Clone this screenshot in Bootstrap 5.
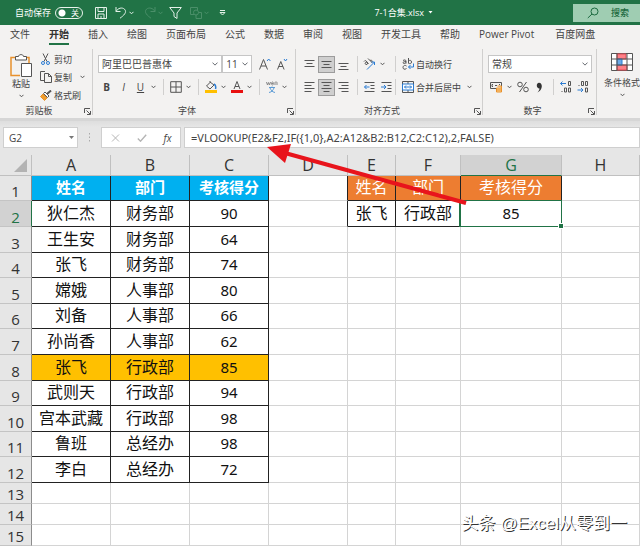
<!DOCTYPE html>
<html lang="zh-CN">
<head>
<meta charset="utf-8">
<meta name="viewport" content="width=device-width, initial-scale=1">
<title>7-1合集.xlsx</title>
<link href="https://cdn.jsdelivr.net/npm/bootstrap@5.3.0/dist/css/bootstrap.min.css" rel="stylesheet">
<style>
body{font-family:"Open Sans","Noto Sans CJK SC",sans-serif;font-size:10px;line-height:14px;color:#444;background:#e6e6e6;overflow-x:hidden}
button{font:inherit;color:inherit;background:none;border:0;padding:0}
svg{display:block;fill:none;stroke:#555;stroke-width:1}
.titlebar{background:#217346;color:#fff;height:25px}
.titlebar svg{stroke:#e4f1e9}
.titlebar .dim svg{stroke:#4a8f69}
.autosave{font-size:9px;padding-left:15px}
.switch-box{position:relative;width:28px;height:12px}
.switch-box input{appearance:none;display:block;width:28px;height:12px;margin:0;border:1px solid #e8f3ec;border-radius:6px;background:radial-gradient(circle at 6px 5px,#fff 3px,transparent 4px)}
.switch-box span{position:absolute;right:4px;top:0;font-size:8px;line-height:12px;pointer-events:none}
.file-name{margin-right:140px;font-size:9px}
.search-box{width:67px;height:18px;background:#9fcdb2;color:#1c6a40;padding-left:14px;font-size:9px;font-weight:500}
.titlebar .search-box svg{stroke:#1c6a40}
.tabs{height:21px;background:#f3f2f1;padding-left:10px;gap:19px}
.tabs a{color:#444;text-decoration:none;line-height:18px;height:20px;white-space:nowrap;border-bottom:2px solid transparent}
.tabs a.current{font-weight:700;color:#333;border-color:#217346}
.tabs .latin{padding-right:2px}
.ribbon{height:75px;background:#f3f2f1;border-bottom:3px solid #d6d6d6}
.group{position:relative;flex:none;padding:6px 5px 0;border-right:1px solid #d0cfce;margin:3px 0}
.g-clip{width:93px;padding-top:1px}.g-font{width:203px}.g-align{width:187px}.g-num{width:114px}.g-style{border:0;padding:4px 0 0 7px}
.caption{position:absolute;left:0;right:0;bottom:-3px;text-align:center;font-size:9px;padding-right:14px}
.launch{position:absolute;right:1px;bottom:0}
.line1{height:18px}.line2{height:18px;margin-top:5px}
.tool{width:17px;height:17px;display:flex;align-items:center;justify-content:center;flex:none}
.chev{width:9px;height:17px;display:flex;align-items:center;justify-content:center;flex:none}
.rule{width:1px;height:16px;background:#d0cfce;margin:0 3px 0 5px;flex:none}
.on{background:#cfcfcf;border:1px solid #9c9c9c}
.pick.form-select{font-size:10px;line-height:15px;height:18px;min-height:0;padding:0 12px 0 3px;border:1px solid #c6c6c6;border-radius:0;color:#444;background-color:#fff;background-size:6px;background-position:right 3px center}
.w-font{width:127px}.w-size{width:30px}.w-num{width:104px}
.lab{font-size:9px;line-height:13px;white-space:nowrap}
.fbar{height:34px;padding-top:6px;background:linear-gradient(#dedede,#e6e6e6 6px)}
.fbar .box{height:21px;background:#fff;border:1px solid #cfcfcf}
.name-box{width:75px;margin-left:3px}
.fbar input{border:0;background:none;color:#444;padding:0;min-width:0;outline:0}
.name-box input{width:56px;font-size:10px;margin-left:5px}
.fx-box{width:80px;margin-right:3px}
.formula input{font-family:"Noto Sans","Noto Sans CJK SC",sans-serif;font-size:11px;width:100%;padding-left:6px}
.sheet{table-layout:fixed;width:100%;border-collapse:separate;border-spacing:0;background:#fff;color:#111;font-size:16px;line-height:20px;text-align:center}
.sheet th,.sheet td{padding:0;border:0 solid #d4d4d4;border-width:0 1px 1px 0;font-weight:400;white-space:nowrap}
.sheet td{font-family:"Noto Sans","Noto Sans CJK SC",sans-serif;font-size:16px}
.sheet td.k{padding-bottom:2px}
.sheet thead th{height:21px;background:#e6e6e6;color:#333;border-color:#c0c0c0;line-height:20px}
.sheet tbody th{background:#e6e6e6;color:#333;border-color:#c4c4c4;border-right-color:#8c8c8c;vertical-align:bottom;font-size:15px;line-height:17px}
.sheet tbody tr{height:21px}
.sheet tbody tr.rec{height:26px}
.sheet tbody tr.rec.short,.sheet tbody tr.headrow{height:25px}
.sheet td.n{font-size:15px}
.sheet td.k{border-color:#222}
.sheet td.kr{border-right-color:#222}
.sheet .blue{background:#00b0f0;color:#fff;font-weight:700;font-size:15px}
.sheet .orange{background:#ed7d31;color:#fff}
.sheet .gold td.k{background:#ffc000}
.sheet thead th.act{background:#d2d2d2;color:#217346;border-bottom-color:#217346}
.sheet tbody th.act{background:#d2d2d2;color:#217346;border-right-color:#217346}
.sel{position:relative}
.sel::before{content:"";position:absolute;inset:-1px -1px -1px -2px;border:2px solid #217346;border-width:1px 1px 1px 2px}
.sel::after{content:"";position:absolute;right:-2px;bottom:-2px;width:4px;height:4px;background:#217346;outline:1px solid #fff}
.pointer{position:absolute;left:267px;top:143px;pointer-events:none}
.watermark{position:absolute;right:13px;bottom:10px;font-family:"Liberation Sans","Noto Sans CJK SC",sans-serif;font-size:17px;line-height:24px;color:#fff;text-shadow:1px 1px 0 #333;white-space:nowrap}
</style>
<script src="https://cdn.jsdelivr.net/npm/bootstrap@5.3.0/dist/js/bootstrap.bundle.min.js"></script>
</head>
<body>
<svg width="0" height="0" class="position-absolute" aria-hidden="true">
<defs>
<symbol id="cv" viewBox="0 0 5 4"><path d="M.5.8 2.5 2.8 4.5.8"/></symbol>
<symbol id="la" viewBox="0 0 7 7"><path d="M.5 5V.5H6M2.500 2.500 6 6M6.500 3v3.500H3"/></symbol>
</defs>
</svg>
<div class="position-relative overflow-hidden">
<header class="titlebar d-flex align-items-center">
  <div class="d-flex align-items-center flex-grow-1">
    <label class="autosave" for="autosave">自动保存</label>
    <div class="switch-box ms-1"><input type="checkbox" role="switch" id="autosave"><span>关</span></div>
    <button class="ms-2 ps-1" aria-label="保存"><svg width="12" height="12" viewBox="0 0 12 12"><path d="M.5.5h11v11h-11zM3 .5v4h6v-4M3 11.500V7h6v4.500M6 9v2.500"/></svg></button>
    <button class="ms-2" aria-label="撤消"><svg width="12" height="13" viewBox="0 0 12 13"><path d="M1 1v4.500h4.500M1 5.500C3 2 7 1 9.500 3.200c3 3-1 6.500-4.500 9"/></svg></button>
    <button class="chev" aria-label="撤消选项"><svg width="5" height="4"><use href="#cv"/></svg></button>
    <button class="ms-1 ps-1 dim" aria-label="恢复"><svg width="12" height="13" viewBox="0 0 12 13"><path d="M11 1v4.500H6.500M11 5.500C9 2 5 1 2.500 3.200c-3 3 1 6.500 4.500 9"/></svg></button>
    <button class="chev dim" aria-label="恢复选项"><svg width="5" height="4"><use href="#cv"/></svg></button>
    <button class="ms-1" aria-label="筛选"><svg width="13" height="12" viewBox="0 0 13 12"><path d="M.7.500h11.600L8 6v5.500L5 9.500V6z"/></svg></button>
    <button class="ms-1 ps-1 dim" aria-label="形状"><svg width="12" height="12" viewBox="0 0 12 12"><path d="M4 7.500H.5v-7h7V3"/><circle cx="6" cy="5.500" r="2.500"/><path d="M6 8v3.500h5.500v-6H8.500"/></svg></button>
    <button class="chev dim" aria-label="形状选项"><svg width="5" height="4"><use href="#cv"/></svg></button>
    <button class="ms-2" aria-label="自定义快速访问工具栏"><svg width="7" height="6" viewBox="0 0 7 6"><path d="M1 .5h5M1 2.500h5L3.500 5z"/></svg></button>
  </div>
  <button class="file-name d-flex align-items-center gap-1">7-1合集.xlsx<svg width="5" height="3" viewBox="0 0 5 3"><path d="M.5 0h4L2.500 2.500z" fill="#fff" stroke="none"/></svg></button>
  <button class="search-box d-flex align-items-center gap-2"><svg width="12" height="12" viewBox="0 0 12 12"><circle cx="7.500" cy="4.500" r="3.500"/><path d="M5 7 .8 11"/></svg><span class="ps-1">搜索</span></button>
</header>
<nav class="tabs d-flex" aria-label="功能区">
  <a href="#">文件</a><a href="#" class="current">开始</a><a href="#">插入</a><a href="#">绘图</a><a href="#">页面布局</a><a href="#">公式</a><a href="#">数据</a><a href="#">审阅</a><a href="#">视图</a><a href="#">开发工具</a><a href="#">帮助</a><a href="#" class="latin">Power Pivot</a><a href="#">百度网盘</a>
</nav>
<section class="ribbon d-flex overflow-hidden">
  <div class="group g-clip d-flex">
    <button class="d-flex flex-column align-items-center ms-1 pt-1"><svg width="24" height="23" viewBox="0 0 24 23"><path d="M8 3.500H2v18h9M16 3.500h4V9" stroke="#e8912d" stroke-width="1.500"/><path d="M6.500 6V2.500h3C9.500 0 14.500 0 14.500 2.500h3V6z" fill="#fff"/><path d="M12.500 9.500h10v13h-10z" fill="#fff"/></svg><span class="lab">粘贴</span><svg width="5" height="4" class="mt-1"><use href="#cv"/></svg></button>
    <div class="d-flex flex-column ms-1">
      <button class="line1 d-flex align-items-center"><span class="tool"><svg width="9" height="12" viewBox="0 0 9 12"><path d="m2 .5 4 8M7 .5l-4 8"/><circle cx="2" cy="10" r="1.500" stroke="#2b7cd3"/><circle cx="7" cy="10" r="1.500" stroke="#2b7cd3"/></svg></span><span class="lab">剪切</span></button>
      <button class="line1 d-flex align-items-center"><span class="tool"><svg width="12" height="12" viewBox="0 0 12 12"><path d="M4 9.500H.5v-9H5M4.500 2.500h4l3 3v6h-7zM8.500 2.500v3h3"/></svg></span><span class="lab">复制</span><svg class="ms-2" width="5" height="4"><use href="#cv"/></svg></button>
      <button class="line1 d-flex align-items-center"><span class="tool"><svg width="12" height="11" viewBox="0 0 12 11"><path d="m11 .5-4 3.500" stroke-width="2"/><path d="m5 2 4 4-1.500 1.500-4-4z" fill="#fff"/><path d="M3 4 .5 6.500l4 4L7 8z" fill="#f0a030" stroke="#e8912d"/></svg></span><span class="lab">格式刷</span></button>
    </div>
    <div class="caption">剪贴板</div>
    <button class="launch" aria-label="剪贴板选项"><svg width="7" height="7"><use href="#la"/></svg></button>
  </div>
  <div class="group g-font">
    <div class="line1 d-flex align-items-center">
      <select class="form-select pick w-font" aria-label="字体"><option>阿里巴巴普惠体</option></select>
      <select class="form-select pick w-size" aria-label="字号"><option>11</option></select>
      <button class="tool ms-1" aria-label="增大字号"><svg width="12" height="12" viewBox="0 0 12 12"><path d="m.5 11.500 4-10 4 10M2 8h5"/><path d="m8 3 1.700-2 1.700 2" stroke="#2b7cd3"/></svg></button>
      <button class="tool" aria-label="减小字号"><svg width="12" height="12" viewBox="0 0 12 12"><path d="m1.500 11.500 3.300-8 3.300 8M2.500 8.500H7"/><path d="m8 1 1.500 2L11 1" stroke="#2b7cd3"/></svg></button>
    </div>
    <div class="line2 d-flex align-items-center">
      <button class="tool fw-bold">B</button><button class="tool fst-italic">I</button><button class="tool text-decoration-underline">U</button><button class="chev" aria-label="下划线选项"><svg width="5" height="4"><use href="#cv"/></svg></button>
      <span class="rule"></span>
      <button class="tool" aria-label="边框"><svg width="12" height="12" viewBox="0 0 12 12" stroke-width="1.300"><path d="M.7.700h10.600v10.600H.7zM6 .7v10.600M.7 6h10.600"/></svg></button><button class="chev" aria-label="边框选项"><svg width="5" height="4"><use href="#cv"/></svg></button>
      <span class="rule"></span>
      <button class="tool" aria-label="填充颜色"><svg width="12" height="12" viewBox="0 0 12 12"><path d="M5.500 1 1.500 5 5 8l4-4L5 1V0"/><path d="M9 3c2 1 2 3 1.500 5" stroke="#2b7cd3" stroke-width="1.500"/><path d="M0 10.500h12" stroke="#ffc000" stroke-width="3"/></svg></button><button class="chev" aria-label="填充选项"><svg width="5" height="4"><use href="#cv"/></svg></button>
      <button class="tool" aria-label="字体颜色"><svg width="12" height="12" viewBox="0 0 12 12"><path d="m3 8 3-7.500L9 8M4 5.500h4"/><path d="M0 10.500h12" stroke="#e81010" stroke-width="3"/></svg></button><button class="chev" aria-label="颜色选项"><svg width="5" height="4"><use href="#cv"/></svg></button>
      <span class="rule"></span>
      <button class="tool" aria-label="拼音"><svg width="12" height="12" viewBox="0 0 12 12"><path d="m.5 1 1 3 1-2.500 1 2.500 1-3M5.500 2.500h2c0-2-2-2-2 0s1.500 1.500 2 1M9 4V1.500c0-.800 2-.800 2 0V4" stroke="#888"/><path d="M3 6.500h6M6 5.500v1M4 7c1 2 2 4 5 4.500M8 7c-1 2-2 4-5 4.500" stroke="#5b9bd5"/></svg></button><button class="chev" aria-label="拼音选项"><svg width="5" height="4"><use href="#cv"/></svg></button>
    </div>
    <div class="caption">字体</div>
    <button class="launch" aria-label="字体选项"><svg width="7" height="7"><use href="#la"/></svg></button>
  </div>
  <div class="group g-align">
    <div class="line1 d-flex align-items-center">
      <button class="tool" aria-label="顶端对齐"><svg width="11" height="11" viewBox="0 0 11 11"><path d="M.5 1.500h10M2.500 4.500h6M.5 7.500h10"/></svg></button>
      <button class="tool on" aria-label="垂直居中"><svg width="11" height="11" viewBox="0 0 11 11"><path d="M.5 2.500h10M2.500 5.500h6M.5 8.500h10"/></svg></button>
      <button class="tool" aria-label="底端对齐"><svg width="11" height="11" viewBox="0 0 11 11"><path d="M.5 4.500h10M2.500 7.500h6M.5 10.500h10"/></svg></button>
      <span class="rule"></span>
      <button class="tool" aria-label="方向"><svg width="13" height="12" viewBox="0 0 13 12"><path d="M1 3.500c1-1.500 2-1 3 .5L5.500 6M4 4C2 4 1.500 6 3 6.500s2-1 1-2.500M5 .5l4 4M7 2.500c2-1 3 1 1.500 2"/><path d="M4 11.500 11.500 4M8.500 4h3v3" stroke="#2b7cd3"/></svg></button><button class="chev" aria-label="方向选项"><svg width="5" height="4"><use href="#cv"/></svg></button>
      <span class="rule ms-2"></span>
      <button class="d-flex align-items-center"><span class="tool"><svg width="12" height="12" viewBox="0 0 12 12"><path d="M1 2.500c1.500-1 3-.5 3 .5v2.500M4 3.500C2 3.500 1 4 1 4.800s2 1 3-.3M6.500 0v5.500M6.500 3c1-1 3-1 3 1s-2 2-3 1M4.500 8C2.500 6.500 1 8 1 9.500s1.500 2.500 3.500 1"/><path d="M11.500 5.500v3.500H6.500M8.500 7l-2 2 2 2" stroke="#2b7cd3"/></svg></span><span class="lab">自动换行</span></button>
    </div>
    <div class="line2 d-flex align-items-center">
      <button class="tool" aria-label="左对齐"><svg width="11" height="11" viewBox="0 0 11 11"><path d="M.5 .5h10M.5 3.500h7M.5 6.500h10M.5 9.500h7"/></svg></button>
      <button class="tool on" aria-label="居中"><svg width="11" height="11" viewBox="0 0 11 11"><path d="M.5 .5h10M2.500 3.500h6M.5 6.500h10M2.500 9.500h6"/></svg></button>
      <button class="tool" aria-label="右对齐"><svg width="11" height="11" viewBox="0 0 11 11"><path d="M.5 .5h10M3.500 3.500h7M.5 6.500h10M3.500 9.500h7"/></svg></button>
      <span class="rule"></span>
      <button class="tool" aria-label="减少缩进"><svg width="11" height="11" viewBox="0 0 11 11"><path d="M.5 .5h10M6.500 3.500h4M6.500 6.500h4M.5 9.500h10"/><path d="M5.500 5H.5M2.500 3l-2 2 2 2" stroke="#2b7cd3"/></svg></button>
      <button class="tool" aria-label="增加缩进"><svg width="11" height="11" viewBox="0 0 11 11"><path d="M.5 .5h10M6.500 3.500h4M6.500 6.500h4M.5 9.500h10"/><path d="M0 5h5M3 3l2 2-2 2" stroke="#2b7cd3"/></svg></button>
      <span class="rule ms-0"></span>
      <button class="d-flex align-items-center"><span class="tool"><svg width="12" height="12" viewBox="0 0 12 12"><path d="M.5.500h11v11H.5zM6 .5V3M6 9v2.500"/><path d="M.5 3h11v6H.5z" fill="#fff" stroke="#2b7cd3"/><path d="M2.500 6h7M4 4.500 2.500 6 4 7.500M8 4.500 9.500 6 8 7.500" stroke="#2b7cd3"/></svg></span><span class="lab">合并后居中</span></button>
      <button class="chev ms-1" aria-label="合并选项"><svg width="5" height="4"><use href="#cv"/></svg></button>
    </div>
    <div class="caption">对齐方式</div>
    <button class="launch" aria-label="对齐选项"><svg width="7" height="7"><use href="#la"/></svg></button>
  </div>
  <div class="group g-num">
    <div class="line1"><select class="form-select pick w-num" aria-label="数字格式"><option>常规</option></select></div>
    <div class="line2 d-flex align-items-center">
      <button class="tool" aria-label="会计数字格式"><svg width="13" height="12" viewBox="0 0 13 12"><path d="M.5 1.500h11v6H.5zM3 3.500H2v2h1M5 4.500h2M9 3.500h1"/><path d="M6.500 7h5v4h-5zM6.500 9h5M7.500 5h4v2" stroke="#e8912d" fill="#ffd08a"/></svg></button><button class="chev" aria-label="货币选项"><svg width="5" height="4"><use href="#cv"/></svg></button>
      <button class="tool" aria-label="百分比"><svg width="12" height="12" viewBox="0 0 12 12"><circle cx="3" cy="3.500" r="2.300"/><circle cx="9" cy="8.500" r="2.300"/><path d="m9.500 1-7 10"/></svg></button>
      <button class="tool" aria-label="千位分隔"><svg width="7" height="11" viewBox="0 0 7 11"><path d="M3 .8C7 .8 7 8 1.500 10.500c1-1.500 2-2.500 2-4C0 6.500 0 .8 3 .8z" fill="#333" stroke="none"/></svg></button>
      <span class="rule"></span>
      <button class="tool" aria-label="增加小数位"><svg width="12" height="12" viewBox="0 0 12 12"><path d="M6 2.500H.5M2.500.500l-2 2 2 2" stroke="#2b7cd3"/><path d="M8.500.500h2v4h-2zM4.500 7h2v4h-2zM8.500 7h2v4h-2zM1.500 10.500h1"/></svg></button>
      <button class="tool" aria-label="减少小数位"><svg width="12" height="12" viewBox="0 0 12 12"><path d="M4.500.500h2v4h-2zM8.500.500h2v4h-2zM1.500 4.500h1M8.500 7h2v4h-2z"/><path d="M.5 9H6M4 7l2 2-2 2" stroke="#2b7cd3"/></svg></button>
    </div>
    <div class="caption">数字</div>
    <button class="launch" aria-label="数字选项"><svg width="7" height="7"><use href="#la"/></svg></button>
  </div>
  <div class="group g-style">
    <button class="d-flex flex-column align-items-center"><svg width="22" height="19" viewBox="0 0 22 19"><path d="M.5.500h21v17H.5z" fill="#fff"/><path d="M6 1h9v5H6zM6 12h10v5H6z" fill="#ff8087" stroke="#e04a55"/><path d="M6 6h5v6H6z" fill="#6ca9e8" stroke="#2b7cd3"/><path d="M.5 6h21M.5 12h21M6 .5v17M16 .5v17"/></svg><span class="lab mt-1">条件格式</span><svg width="5" height="4" class="mt-1"><use href="#cv"/></svg></button>
  </div>
</section>
<section class="fbar d-flex">
  <div class="box name-box d-flex align-items-center flex-shrink-0"><input type="text" value="G2" aria-label="名称框"><svg class="ms-1" width="5" height="3" viewBox="0 0 5 3"><path d="M0 0h5L2.500 3z" fill="#777" stroke="none"/></svg></div>
  <svg class="mx-2 flex-shrink-0" width="7" height="21" viewBox="0 0 7 21"><path d="M3.500 6v1.500M3.500 9.500V11M3.500 13v1.500" stroke="#aaa"/></svg>
  <div class="box fx-box d-flex align-items-center justify-content-around flex-shrink-0">
    <button aria-label="取消"><svg width="9" height="8" viewBox="0 0 9 8"><path d="m1 .5 7 7M8 .5l-7 7" stroke="#b5b5b5"/></svg></button>
    <button aria-label="输入"><svg width="10" height="8" viewBox="0 0 10 8"><path d="m.8 4.500 2.700 2.700L9.200.8" stroke="#b5b5b5" stroke-width="1.400"/></svg></button>
    <button class="fst-italic" aria-label="插入函数">fx</button>
  </div>
  <div class="box formula d-flex align-items-center flex-grow-1"><input type="text" value="=VLOOKUP(E2&amp;F2,IF({1,0},A2:A12&amp;B2:B12,C2:C12),2,FALSE)" aria-label="编辑栏"></div>
</section>
<table class="sheet">
  <colgroup><col width="32"><col width="79"><col width="79"><col width="79"><col width="79"><col width="48"><col width="65"><col width="101"><col></colgroup>
  <thead><tr><th aria-label="全选"><svg class="ms-auto me-1" width="13" height="13" viewBox="0 0 13 13"><path d="M13 0v13H0z" fill="#b3b3b3" stroke="none"/></svg></th><th>A</th><th>B</th><th>C</th><th>D</th><th>E</th><th>F</th><th class="act">G</th><th>H</th></tr></thead>
  <tbody>
  <tr class="headrow"><th>1</th><td class="k blue">姓名</td><td class="k blue">部门</td><td class="k blue">考核得分</td><td class="kr"></td><td class="k orange">姓名</td><td class="k orange">部门</td><td class="k orange">考核得分</td><td></td></tr>
  <tr class="rec"><th class="act">2</th><td class="k">狄仁杰</td><td class="k">财务部</td><td class="k n">90</td><td class="kr"></td><td class="k">张飞</td><td class="k">行政部</td><td class="k n sel">85</td><td></td></tr>
  <tr class="rec"><th>3</th><td class="k">王生安</td><td class="k">财务部</td><td class="k n">64</td><td></td><td></td><td></td><td></td><td></td></tr>
  <tr class="rec short"><th>4</th><td class="k">张飞</td><td class="k">财务部</td><td class="k n">74</td><td></td><td></td><td></td><td></td><td></td></tr>
  <tr class="rec"><th>5</th><td class="k">嫦娥</td><td class="k">人事部</td><td class="k n">80</td><td></td><td></td><td></td><td></td><td></td></tr>
  <tr class="rec short"><th>6</th><td class="k">刘备</td><td class="k">人事部</td><td class="k n">66</td><td></td><td></td><td></td><td></td><td></td></tr>
  <tr class="rec"><th>7</th><td class="k">孙尚香</td><td class="k">人事部</td><td class="k n">62</td><td></td><td></td><td></td><td></td><td></td></tr>
  <tr class="rec gold"><th>8</th><td class="k">张飞</td><td class="k">行政部</td><td class="k n">85</td><td></td><td></td><td></td><td></td><td></td></tr>
  <tr class="rec short"><th>9</th><td class="k">武则天</td><td class="k">行政部</td><td class="k n">94</td><td></td><td></td><td></td><td></td><td></td></tr>
  <tr class="rec"><th>10</th><td class="k">宫本武藏</td><td class="k">行政部</td><td class="k n">98</td><td></td><td></td><td></td><td></td><td></td></tr>
  <tr class="rec short"><th>11</th><td class="k">鲁班</td><td class="k">总经办</td><td class="k n">98</td><td></td><td></td><td></td><td></td><td></td></tr>
  <tr class="rec"><th>12</th><td class="k">李白</td><td class="k">总经办</td><td class="k n">72</td><td></td><td></td><td></td><td></td><td></td></tr>
  <tr><th>13</th><td></td><td></td><td></td><td></td><td></td><td></td><td></td><td></td></tr>
  <tr><th>14</th><td></td><td></td><td></td><td></td><td></td><td></td><td></td><td></td></tr>
  <tr><th>15</th><td></td><td></td><td></td><td></td><td></td><td></td><td></td><td></td></tr>
  </tbody>
</table>
<svg class="pointer" width="204" height="66" viewBox="0 0 204 66" aria-hidden="true"><path d="M18 10 199 60" stroke="#e8141c" stroke-width="4"/><path d="M0 4 24 1 18 20z" fill="#e8141c" stroke="none"/></svg>
<div class="watermark">头条 @Excel从零到一</div>
</div>
</body>
</html>
